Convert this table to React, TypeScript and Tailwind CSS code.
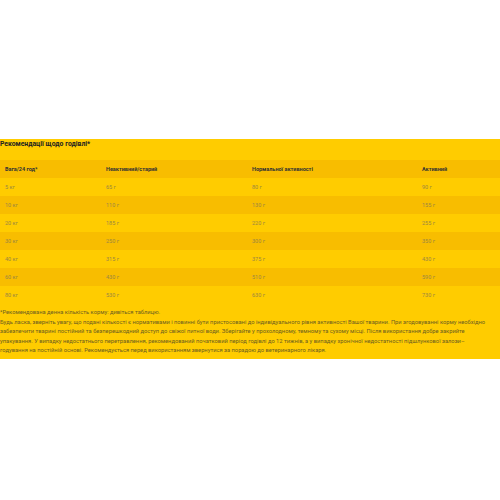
const ROWS = [
  ["5 кг", "65 г", "80 г", "90 г"],
  ["10 кг", "110 г", "130 г", "155 г"],
  ["20 кг", "185 г", "220 г", "255 г"],
  ["30 кг", "250 г", "300 г", "350 г"],
  ["40 кг", "315 г", "375 г", "430 г"],
  ["60 кг", "430 г", "510 г", "590 г"],
  ["80 кг", "530 г", "630 г", "730 г"],
];

const HEAD = ["Вага/24 год*", "Неактивний/старий", "Нормальної активності", "Активний"];

// рядки примітки розбиті так само, як на сторінці
const NOTE = [
  "Будь ласка, зверніть увагу, що подані кількості є нормативами і повинні бути пристосовані до індивідуального рівня активності Вашої тварини. При згодовуванні корму необхідно",
  "забезпечити тварині постійний та безперешкодний доступ до свіжої питної води. Зберігайте у прохолодному, темному та сухому місці. Після використання добре закрийте",
  "упакування. У випадку недостатнього перетравлення, рекомендований початковий період годівлі до 12 тижнів, а у випадку хронічної недостатності підшлункової залози–",
  "годування на постійній основі. Рекомендується перед використанням звернутися за порадою до ветеринарного лікаря.",
];

const cols = "grid grid-cols-[101px_146px_170px_83px]";

export default function App() {
  return (
    <div className="w-[500px] h-[500px] bg-white overflow-hidden pt-[139px] font-['Roboto',_'Liberation_Sans',_sans-serif]">
      <div className="bg-[#ffcc00] pb-[3px]">
        <h2 className="text-[6.8px] leading-[11px] font-bold text-[#222] mb-[10px]">
          Рекомендації щодо годівлі*
        </h2>

        <div className={`${cols} h-[18px] items-center bg-[#f8bd00] text-[5.5px] font-bold text-[#333]`}>
          {HEAD.map((h) => (
            <div key={h} className="px-[5px]">{h}</div>
          ))}
        </div>

        {ROWS.map((r, i) => (
          <div
            key={r[0]}
            className={`${cols} h-[18px] items-center text-[5.5px] text-[#9a8644] ${i % 2 === 1 ? "bg-[#f8bd00]" : "bg-[#ffcc00]"}`}
          >
            {r.map((c, j) => (
              <div key={j} className="px-[5px]">{c}</div>
            ))}
          </div>
        ))}

        <div className="mt-[4px] text-[5.75px] leading-[9.6px] text-[#6e5e20] whitespace-nowrap">
          <p>*Рекомендована денна кількість корму: дивіться таблицю.</p>
          {NOTE.map((l) => (
            <p key={l}>{l}</p>
          ))}
        </div>
      </div>
    </div>
  );
}
